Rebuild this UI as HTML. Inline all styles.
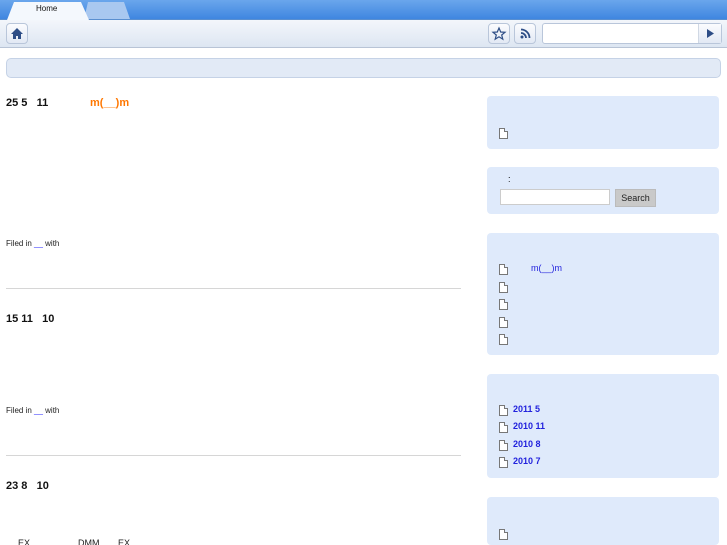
<!DOCTYPE html><html style="overflow:hidden;height:545px"><head><style>
body{margin:0;width:727px;height:545px;overflow:hidden;background:#fff;font-family:"Liberation Sans","Noto Sans CJK JP",sans-serif;position:relative}
.a{position:absolute}
.btn{position:absolute;width:20px;height:19px;border:1px solid #b9c6da;border-radius:4px;background:linear-gradient(#fbfcfe,#e2e9f4)}
.box{position:absolute;left:487px;width:232px;background:#dfeafb;border-radius:4px}
.doc{position:absolute;left:12px;width:9px;height:11px;border:1px solid #777;background:#fff;box-sizing:border-box}
.doc:after{content:"";position:absolute;right:-1px;top:-1px;width:3px;height:3px;background:#dfeafb;border-left:1px solid #777;border-bottom:1px solid #777}
.lk{position:absolute;color:#2222dd;font-size:10px}
.h{position:absolute;left:6px;font-weight:bold;font-size:11px;color:#111}
.f{position:absolute;left:6px;font-size:8px;color:#222}
.hr{position:absolute;left:6px;width:455px;height:1px;background:#d6d6d6}
</style></head><body>
<div class="a" style="left:0;top:0;width:727px;height:19px;background:linear-gradient(#6aa6ec,#3f86e0);border-bottom:1px solid #5a8fd0"></div>
<div class="a" style="left:84px;top:2px;width:46px;height:17px;background:#a9c8f0;clip-path:polygon(4px 0,40px 0,46px 100%,0 100%)"></div>
<div class="a" style="left:7px;top:2px;width:82px;height:18px;background:#f4f8fd;clip-path:polygon(7px 0,74px 0,82px 100%,0 100%)"></div>
<div class="a" style="left:36px;top:4px;font-size:8px;color:#111">Home</div>
<div class="a" style="left:0;top:20px;width:727px;height:27px;background:linear-gradient(#f3f6fb,#dde6f2);border-bottom:1px solid #b8c4d6"></div>
<div class="btn" style="left:6px;top:23px"><svg width="20" height="19"><path d="M10 4 L4 10 H6 V15 H9 V12 H11 V15 H14 V10 H16 Z" fill="#2d4d86"/></svg></div>
<div class="btn" style="left:488px;top:23px"><svg width="20" height="19"><path d="M10 4 L11.7 8 L16 8.3 L12.7 11 L13.8 15.2 L10 12.8 L6.2 15.2 L7.3 11 L4 8.3 L8.3 8Z" fill="none" stroke="#2d4d86" stroke-width="1.2"/></svg></div>
<div class="btn" style="left:514px;top:23px"><svg width="20" height="19"><circle cx="7" cy="13" r="1.5" fill="#2d4d86"/><path d="M6 9a5 5 0 0 1 5 5M6 5.5a8.5 8.5 0 0 1 8.5 8.5" fill="none" stroke="#2d4d86" stroke-width="1.8"/></svg></div>
<div class="a" style="left:542px;top:23px;width:178px;height:19px;background:#fff;border:1px solid #b9c6da;border-radius:3px"></div>
<div class="a" style="left:698px;top:24px;width:22px;height:19px;border-left:1px solid #d0d8e4;background:linear-gradient(#fbfcfe,#e2e9f4)"><svg width="22" height="19"><path d="M8 5 L15 9.5 L8 14Z" fill="#2d4d86"/></svg></div>
<div class="a" style="left:6px;top:58px;width:713px;height:18px;background:#e2eaf6;border:1px solid #c5d2e6;border-radius:5px"></div>

<div class="h" style="top:97px">25 5&nbsp;&nbsp;&nbsp;11</div>
<div class="a" style="left:90px;top:97px;font-size:11px;font-weight:bold;color:#ff7700">m(__)m</div>
<div class="f" style="top:239px">Filed in <span style="color:#33f">__</span> with</div>
<div class="hr" style="top:288px"></div>
<div class="h" style="top:313px">15 11&nbsp;&nbsp;&nbsp;10</div>
<div class="f" style="top:406px">Filed in <span style="color:#33f">__</span> with</div>
<div class="hr" style="top:455px"></div>
<div class="h" style="top:480px">23 8&nbsp;&nbsp;&nbsp;10</div>
<div class="a" style="left:18px;top:538px;font-size:9px;color:#222">EX</div>
<div class="a" style="left:78px;top:538px;font-size:9px;color:#222">DMM</div>
<div class="a" style="left:118px;top:538px;font-size:9px;color:#222">EX</div>

<div class="box" style="top:96px;height:53px"><div class="doc" style="top:32px"></div></div>
<div class="box" style="top:167px;height:47px">
<div class="a" style="left:21px;top:7px;font-size:9px">:</div>
<div class="a" style="left:13px;top:22px;width:108px;height:14px;background:#fff;border:1px solid #ccc"></div>
<div class="a" style="left:128px;top:22px;width:39px;height:16px;background:#c9c9c9;border:1px solid #bbb;font-size:9px;line-height:16px;text-align:center;color:#222">Search</div>
</div>
<div class="box" style="top:233px;height:122px">
<div class="doc" style="top:31px"></div><div class="lk" style="left:44px;top:30px;font-size:9px">m(__)m</div>
<div class="doc" style="top:49px"></div><div class="doc" style="top:66px"></div><div class="doc" style="top:84px"></div><div class="doc" style="top:101px"></div>
</div>
<div class="box" style="top:374px;height:104px">
<div class="doc" style="top:31px"></div><div class="lk" style="left:26px;top:30px;font-size:9px;font-weight:bold">2011 5</div>
<div class="doc" style="top:48px"></div><div class="lk" style="left:26px;top:47px;font-size:9px;font-weight:bold">2010 11</div>
<div class="doc" style="top:66px"></div><div class="lk" style="left:26px;top:65px;font-size:9px;font-weight:bold">2010 8</div>
<div class="doc" style="top:83px"></div><div class="lk" style="left:26px;top:82px;font-size:9px;font-weight:bold">2010 7</div>
</div>
<div class="box" style="top:497px;height:48px"><div class="doc" style="top:32px"></div></div>
</body></html>
